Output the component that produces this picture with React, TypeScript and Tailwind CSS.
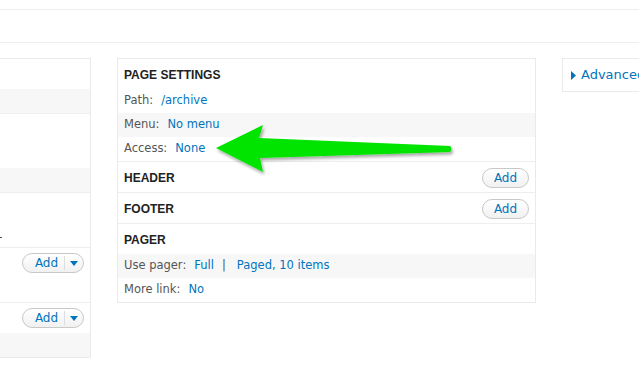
import React from 'react'

const link = 'text-[#0074bd]'

const Item = ({ label, gray, children }: { label: string; gray?: boolean; children: React.ReactNode }) => (
  <div className={`h-[24px] flex items-center px-[6px] text-[11.5px] text-[#555] ${gray ? 'bg-[#f7f7f7]' : ''}`}>
    <span>{label}</span>
    <span className="ml-[8px] flex items-center">{children}</span>
  </div>
)

const Title = ({ text, children }: { text: string; children?: React.ReactNode }) => (
  <div className="h-[30px] flex items-center justify-between px-[6px] pt-px">
    <span className="font-['Liberation_Sans',sans-serif] font-bold text-[12px] text-[#222]">{text}</span>
    {children}
  </div>
)

const AddButton = () => (
  <button className="h-[20px] w-[47px] rounded-full border border-[#c8c8c8] bg-gradient-to-b from-white to-[#f1f1f1] text-[12px] text-[#0074bd] leading-none">
    Add
  </button>
)

const AddDropdown = () => (
  <div className="h-[20px] w-[62px] rounded-full border border-[#c8c8c8] bg-gradient-to-b from-white to-[#f1f1f1] flex items-center text-[12px] text-[#0074bd]">
    <span className="flex-1 text-center pl-[6px]">Add</span>
    <span className="h-[14px] w-px bg-[#ddd]" />
    <span className="w-[18px] flex justify-center">
      <svg width="8" height="5" viewBox="0 0 8 5">
        <path d="M0 0h8L4 5z" fill="#0074bd" />
      </svg>
    </span>
  </div>
)

const Arrow = () => (
  <svg className="absolute left-0 top-0 pointer-events-none" width="639" height="366" viewBox="0 0 639 366">
    <defs>
      <filter id="sh" x="-10%" y="-50%" width="120%" height="200%">
        <feDropShadow dx="1.5" dy="2.5" stdDeviation="1.6" floodColor="#000" floodOpacity="0.35" />
      </filter>
    </defs>
    <path
      d="M216 148 L263 125 L259 138 L450 146 Q453 149 450 152 L260 158 L263 172 Z"
      fill="#00e400"
      filter="url(#sh)"
    />
  </svg>
)

export default function App() {
  return (
    <div className="relative w-[639px] h-[366px] overflow-hidden bg-white font-['DejaVu_Sans',sans-serif]">
      <div className="mt-[9px] h-[34px] border-y border-[#eee]" />

      <div className="mt-[15px] flex items-start gap-[26px]">
        {/* left column, mostly off-screen */}
        <div className="w-[91px] shrink-0 border-y border-r border-[#eaeaea]">
          <div className="h-[30px]" />
          <div className="h-[24px] bg-[#f7f7f7]" />
          <div className="border-t border-[#eee]">
            <div className="h-[30px]" />
            <div className="h-[24px]" />
            <div className="h-[24px] bg-[#f7f7f7]" />
          </div>
          <div className="border-t border-[#eee]">
            <div className="h-[30px]" />
            <div className="h-[24px] relative">
              <span className="absolute left-0 top-[14px] h-px w-[2px] bg-[#555]" />
            </div>
          </div>
          <div className="border-t border-[#eee]">
            <div className="h-[30px] flex items-center justify-end pr-[6px]">
              <AddDropdown />
            </div>
            <div className="h-[24px]" />
          </div>
          <div className="border-t border-[#eee]">
            <div className="h-[30px] flex items-center justify-end pr-[6px]">
              <AddDropdown />
            </div>
            <div className="h-[24px] bg-[#f7f7f7]" />
          </div>
        </div>

        {/* middle column */}
        <div className="w-[419px] shrink-0 border border-[#eaeaea]">
          <Title text="PAGE SETTINGS" />
          <Item label="Path:">
            <span className={link}>/archive</span>
          </Item>
          <Item label="Menu:" gray>
            <span className={link}>No menu</span>
          </Item>
          <Item label="Access:">
            <span className={link}>None</span>
          </Item>
          <div className="border-t border-[#eee]">
            <Title text="HEADER">
              <AddButton />
            </Title>
          </div>
          <div className="border-t border-[#eee]">
            <Title text="FOOTER">
              <AddButton />
            </Title>
          </div>
          <div className="border-t border-[#eee]">
            <Title text="PAGER" />
            <Item label="Use pager:" gray>
              <span className={link}>Full</span>
              <span className="ml-[8px] text-[#555]">|</span>
              <span className={`ml-[11px] ${link}`}>Paged, 10 items</span>
            </Item>
            <Item label="More link:">
              <span className={link}>No</span>
            </Item>
          </div>
        </div>

        {/* right column */}
        <div className="w-[120px] shrink-0 h-[34px] border border-[#eaeaea] flex items-center pl-[8px]">
          <svg width="5" height="9" viewBox="0 0 5 9" className="mr-[5px]">
            <path d="M0 0L5 4.5L0 9z" fill="#0074bd" />
          </svg>
          <span className="text-[13px] text-[#0074bd] whitespace-nowrap">Advanced</span>
        </div>
      </div>

      <Arrow />
    </div>
  )
}
